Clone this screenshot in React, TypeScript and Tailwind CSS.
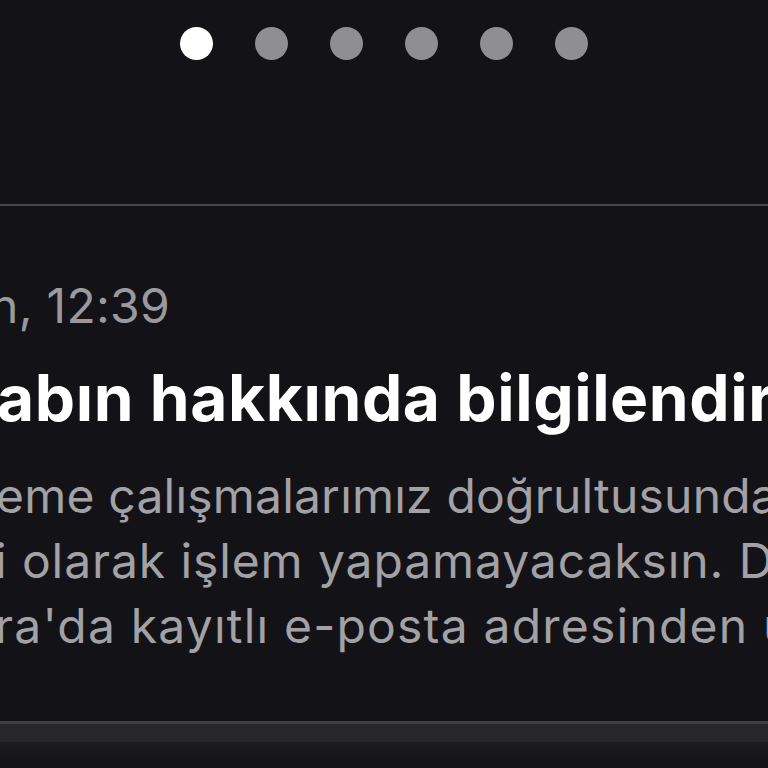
import * as React from "react";

const dots = [true, false, false, false, false, false];

// each line: hidden prefix (ends just left of the screen edge) + visible rest
function Line({
  prefix,
  rest,
  offset,
  className,
}: {
  prefix: string;
  rest: string;
  offset: string;
  className: string;
}) {
  return (
    <div className={`flex whitespace-nowrap ${offset} ${className}`}>
      <span className="w-[400px] shrink-0 text-right">{prefix}</span>
      <span>{rest}</span>
    </div>
  );
}

export default function App() {
  return (
    <div
      className="relative flex h-[768px] w-[768px] flex-col overflow-hidden bg-[#131317]"
      style={{ fontFamily: "Inter, 'Noto Sans', sans-serif" }}
    >
      <div className="flex justify-center gap-[42px] pt-[27px]">
        {dots.map((active, i) => (
          <span
            key={i}
            className={`h-[33px] w-[33px] rounded-full ${active ? "bg-white" : "bg-[#8e8e93]"}`}
          />
        ))}
      </div>

      <div className="mt-[144px] h-[2px] w-full bg-[#46464b]" />

      <div className="mt-[71px]">
        <Line
          prefix="Bugü"
          rest="n, 12:39"
          offset="ml-[-410px]"
          className="text-[48px] leading-[58px] tracking-[0.3px] text-[#99999e]"
        />
        <Line
          prefix="Hes"
          rest="abın hakkında bilgilendirme"
          offset="ml-[-403px] mt-[24px]"
          className="text-[64px] font-bold leading-[78px] tracking-[0.6px] text-white"
        />
        <div className="mt-[26px] text-[48px] leading-[65px] text-[#a1a1a6]">
          <Line
            prefix="Güncell"
            rest="eme çalışmalarımız doğrultusunda hesabın"
            offset="ml-[-404px]"
            className="tracking-[0.2px]"
          />
          <Line
            prefix="geçic"
            rest="i olarak işlem yapamayacaksın. Destek için"
            offset="ml-[-405px]"
            className="tracking-[0.9px]"
          />
          <Line
            prefix="Pap"
            rest="ra'da kayıtlı e-posta adresinden ulaşabilirsin."
            offset="ml-[-405px]"
            className="tracking-[1.2px]"
          />
        </div>
      </div>

      <div className="mt-auto">
        <div className="h-[3px] w-full bg-[#3f3f45]" />
        <div className="h-[18px] w-full bg-[#26262b]" />
        <div className="h-[26px] w-full bg-gradient-to-b from-[#1c1c20] to-[#131317]" />
      </div>
    </div>
  );
}
